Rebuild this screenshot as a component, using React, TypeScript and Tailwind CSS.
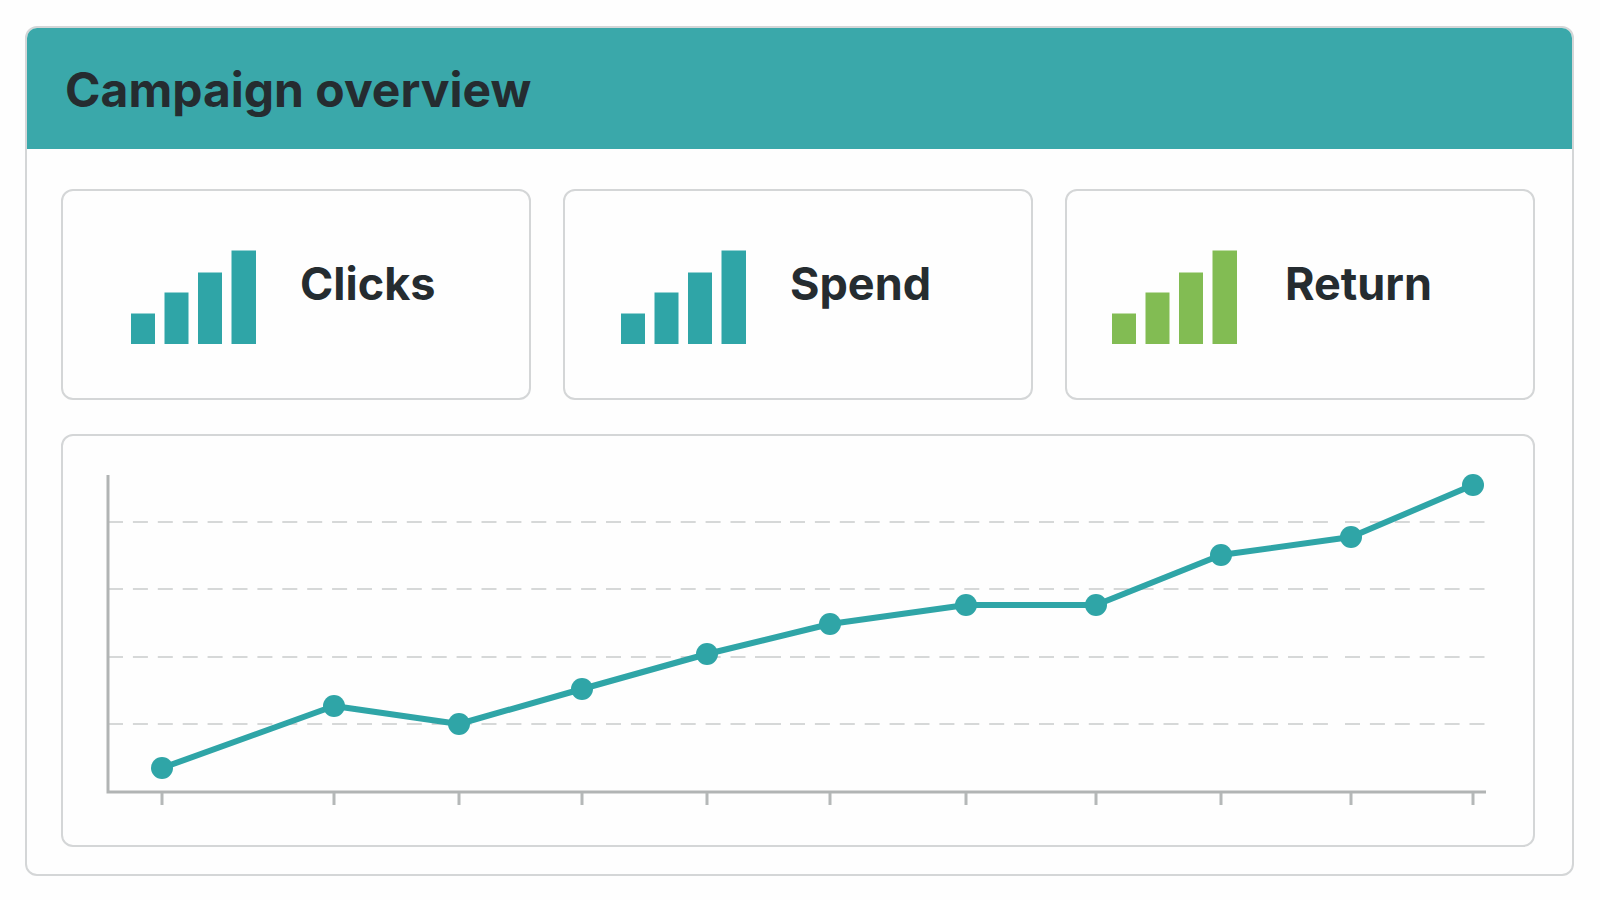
import clsx from 'clsx'

const METRICS = [
  { label: 'Clicks', color: 'text-[#2fa5a7]', spacing: 'pl-[68px] gap-11' },
  { label: 'Spend', color: 'text-[#2fa5a7]', spacing: 'pl-14 gap-11' },
  { label: 'Return', color: 'text-[#82bc53]', spacing: 'pl-[45px] gap-12' },
]

const POINTS = [
  [99, 332],
  [271, 270],
  [396, 288],
  [519, 253],
  [644, 218],
  [767, 188],
  [903, 169],
  [1033, 169],
  [1158, 119],
  [1288, 101],
  [1410, 49],
]

const GRID_LINES = [86, 153, 221, 288]

function BarsIcon({ className }: { className?: string }) {
  return (
    <svg viewBox="0 0 125 94" className={clsx('w-[125px] h-[94px] shrink-0', className)} fill="currentColor" aria-hidden="true">
      <rect x="0" y="63.5" width="24" height="30.5" />
      <rect x="33.5" y="42.5" width="24" height="51.5" />
      <rect x="67" y="22.5" width="24" height="71.5" />
      <rect x="100.5" y="0.5" width="24.5" height="93.5" />
    </svg>
  )
}

function TrendChart() {
  return (
    <svg viewBox="0 0 1470 409" className="block w-full h-auto" fill="none" role="img" aria-label="Campaign trend">
      {GRID_LINES.map((y) => (
        <path
          key={y}
          d={`M45 ${y}H685M692 ${y}H707M703 ${y}H718M727 ${y}H1267M1282 ${y}H1422`}
          stroke="#d6d8d8"
          strokeWidth="2"
          strokeDasharray="15 9.9"
        />
      ))}
      <path d="M45 39V356H1423" stroke="#b1b4b4" strokeWidth="3" />
      {POINTS.map(([x]) => (
        <path key={x} d={`M${x} 357V369`} stroke="#b5b8b8" strokeWidth="3" />
      ))}
      <polyline points={POINTS.map((p) => p.join(',')).join(' ')} stroke="#2fa5a7" strokeWidth="6" strokeLinejoin="round" />
      {POINTS.map(([x, y]) => (
        <circle key={x} cx={x} cy={y} r="11" fill="#2fa5a7" />
      ))}
    </svg>
  )
}

export default function App() {
  return (
    <div className="min-h-screen bg-[#fefefe] pt-[26px] pl-[25px] pr-[26px] pb-6 font-['Inter',sans-serif] text-[#252c30]">
      <main className="border-2 border-[#d4d6d7] rounded-xl overflow-hidden">
        <header className="bg-[#3aa8aa] px-[38px] pt-8 pb-[29px]">
          <h1 className="text-[48px] leading-[60px] font-bold">Campaign overview</h1>
        </header>

        <div className="flex flex-col gap-[34px] pt-10 pb-[27px] pl-[34px] pr-[37px]">
          <div className="grid grid-cols-3 gap-8">
            {METRICS.map(({ label, color, spacing }) => (
              <section key={label} className={clsx('flex items-start border-2 border-[#d4d6d7] rounded-xl pt-[59px] pb-[54px]', spacing)}>
                <BarsIcon className={color} />
                <h2 className="mt-[10px] text-[45px] leading-[48px] font-bold">{label}</h2>
              </section>
            ))}
          </div>

          <section className="border-2 border-[#d4d6d7] rounded-xl">
            <TrendChart />
          </section>
        </div>
      </main>
    </div>
  )
}
